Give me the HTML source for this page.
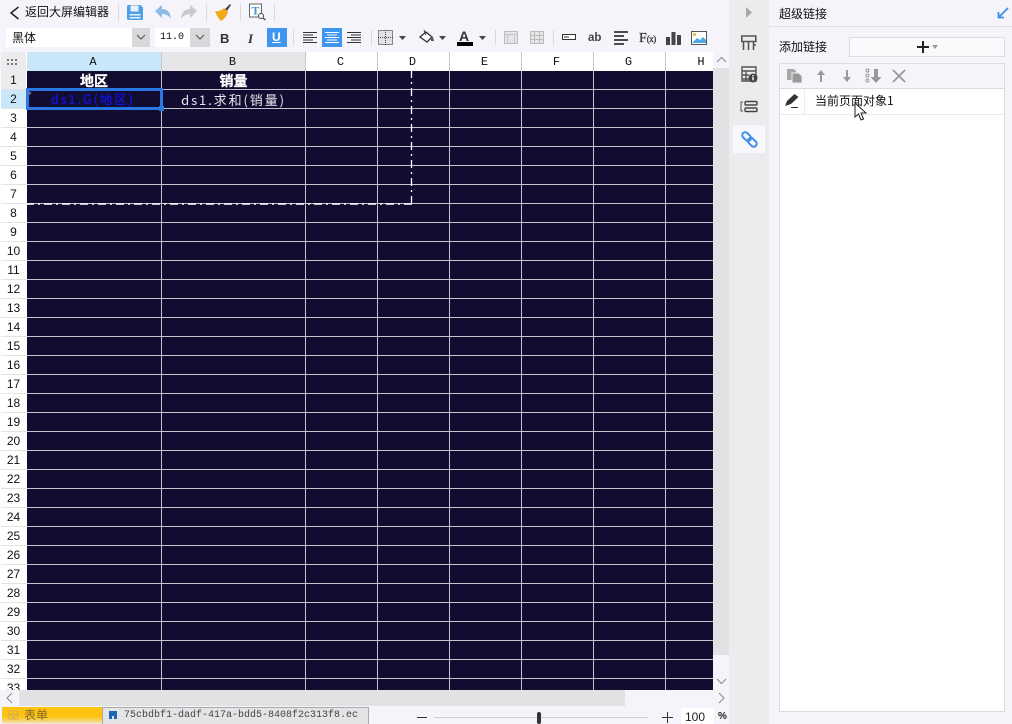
<!DOCTYPE html>
<html><head><meta charset="utf-8">
<style>
html,body{margin:0;padding:0;width:1012px;height:724px;overflow:hidden;background:#f4f4fa;font-family:"Liberation Sans","Noto Sans CJK SC",sans-serif;color:#111}
.a{position:absolute}
.t{position:absolute;white-space:nowrap;line-height:1}
.cjk{font-family:"WenQuanYi Zen Hei","Noto Sans CJK SC",sans-serif}
.mono{font-family:"Liberation Mono","WenQuanYi Zen Hei",monospace}
.sep{position:absolute;width:1px;background:#d8d8de}
.cl{position:absolute;top:52px;height:19px;text-align:center;font:12px/20px "Liberation Mono",monospace;color:#111;border-right:1px solid #c6c6cc;box-sizing:border-box;padding-right:2px}
.rl{position:absolute;left:1px;width:25px;height:19px;text-align:center;font:12px/19px "Liberation Sans",sans-serif;color:#111;background:#fff;box-sizing:border-box;border-bottom:1px solid #e2e2e6}
svg{position:absolute;overflow:visible}
</style></head>
<body>
<!-- top toolbar -->
<svg style="left:8px;top:6px" width="14" height="14"><path d="M10.500 1 3 7l7.500 6" fill="none" stroke="#222" stroke-width="1.500"/></svg>
<div class="t cjk" style="left:25px;top:6px;font-size:12px;color:#111">返回大屏编辑器</div>
<div class="sep" style="left:118px;top:4px;height:17px"></div>
<svg style="left:126px;top:4px" width="18" height="17"><path d="M1 2.500Q1 1 2.500 1h12L17 3.500V14.500Q17 16 15.500 16h-13Q1 16 1 14.500Z" fill="#4f9fe6"/><rect x="4.500" y="1.500" width="8" height="6" fill="#e8f1fa"/><rect x="3.500" y="10" width="11" height="1.500" fill="#e8f1fa"/><rect x="3.500" y="13" width="11" height="1.500" fill="#e8f1fa"/></svg>
<svg style="left:154px;top:4px" width="18" height="17"><path d="M1 7 8 1v4q8 0 9 10-3-5-9-5v4Z" fill="#8dbbe6"/></svg>
<svg style="left:180px;top:4px" width="18" height="17"><path d="M17 7 10 1v4Q2 5 1 15q3-5 9-5v4Z" fill="#c9c9cd"/></svg>
<div class="sep" style="left:206px;top:4px;height:17px"></div>
<svg style="left:214px;top:3px" width="18" height="18"><path d="M11 6 16 1l1 1-4 6Z" fill="#444"/><path d="M1 8q5 1 9-3l4 4q-2 6-7 9Q3 14 1 8Z" fill="#f3a916"/></svg>
<div class="sep" style="left:240px;top:4px;height:17px"></div>
<svg style="left:249px;top:3px" width="17" height="17"><rect x=".5" y="1" width="12" height="13" fill="#fff" stroke="#666"/><text x="2.500" y="11.500" font-family="Liberation Serif" font-weight="bold" font-size="12" fill="#4a90d0">T</text><circle cx="12" cy="13" r="2.500" fill="#fff" stroke="#444"/><path d="m14 15 2.500 2" stroke="#444" stroke-width="1.300"/></svg>
<div class="sep" style="left:274px;top:4px;height:17px"></div>

<!-- format toolbar -->
<div class="a" style="left:6px;top:28px;width:126px;height:19px;background:#fff"></div>
<div class="t cjk" style="left:12px;top:32px;font-size:12px">黑体</div>
<div class="a" style="left:132px;top:28px;width:18px;height:19px;background:#d9d9db"></div>
<svg style="left:136px;top:34px" width="10" height="7"><path d="m1 1 4 4 4-4" fill="none" stroke="#555" stroke-width="1.100"/></svg>
<div class="a" style="left:155px;top:28px;width:35px;height:19px;background:#fff"></div>
<div class="t mono" style="left:160px;top:33px;font-size:10px">11.0</div>
<div class="a" style="left:190px;top:28px;width:20px;height:19px;background:#d9d9db"></div>
<svg style="left:195px;top:34px" width="10" height="7"><path d="m1 1 4 4 4-4" fill="none" stroke="#555" stroke-width="1.100"/></svg>
<div class="t" style="left:220px;top:32px;font-size:13px;font-weight:bold;color:#333">B</div>
<div class="t" style="left:248px;top:31px;font:italic bold 13px 'Liberation Serif',serif;color:#333">I</div>
<div class="a" style="left:267px;top:28px;width:20px;height:19px;background:#3f96ef"></div>
<div class="t" style="left:272px;top:31px;font-size:12px;font-weight:bold;color:#fff;text-decoration:underline">U</div>
<div class="sep" style="left:293px;top:30px;height:15px"></div>
<svg style="left:303px;top:32px" width="15" height="13"><path d="M0 .5h14M0 3h10M0 5.500h14M0 8h10M0 10.500h14" stroke="#333" stroke-width="1"/></svg>
<div class="a" style="left:322px;top:28px;width:20px;height:19px;background:#3f96ef"></div>
<svg style="left:325px;top:32px" width="15" height="13"><path d="M0 .5h14M2 3h10M0 5.500h14M2 8h10M0 10.500h14" stroke="#fff" stroke-width="1"/></svg>
<svg style="left:347px;top:32px" width="15" height="13"><path d="M0 .5h14M4 3h10M0 5.500h14M4 8h10M0 10.500h14" stroke="#333" stroke-width="1"/></svg>
<div class="sep" style="left:371px;top:30px;height:15px"></div>
<svg style="left:378px;top:30px" width="15" height="15"><rect x=".5" y=".5" width="14" height="14" fill="#e2e2e6" stroke="#222" stroke-dasharray="1 1"/><path d="M7.500 0v15M0 7.500h15" stroke="#444" stroke-dasharray="1 1"/></svg>
<svg style="left:399px;top:36px" width="8" height="5"><path d="M0 0h7L3.500 4Z" fill="#444"/></svg>
<svg style="left:418px;top:29px" width="17" height="17"><path d="M2 8 8 3l6 5-5 5Z" fill="#fff" stroke="#333" stroke-width="1.300"/><path d="M6 1 8 6" stroke="#333"/><path d="M13 8h2l1 4h-3Z" fill="#555"/></svg>
<svg style="left:439px;top:36px" width="8" height="5"><path d="M0 0h7L3.500 4Z" fill="#444"/></svg>
<div class="t" style="left:459px;top:29px;font-size:14px;font-weight:bold;color:#333">A</div>
<div class="a" style="left:457px;top:42px;width:16px;height:4px;background:#000"></div>
<svg style="left:479px;top:36px" width="8" height="5"><path d="M0 0h7L3.500 4Z" fill="#444"/></svg>
<div class="sep" style="left:495px;top:30px;height:15px"></div>
<svg style="left:504px;top:31px" width="14" height="14"><rect x=".5" y=".5" width="13" height="12" fill="#e6e6e8" stroke="#bbb"/><path d="M0 3.500h14M3.500 3.500v9M10.500 3.500v9" stroke="#c4c4c8"/></svg>
<svg style="left:530px;top:31px" width="14" height="14"><rect x=".5" y=".5" width="13" height="12" fill="#e6e6e8" stroke="#bbb"/><path d="M0 4.500h14M0 8.500h14M4.500 0v13M9.500 0v13" stroke="#bbb"/></svg>
<div class="sep" style="left:553px;top:30px;height:15px"></div>
<svg style="left:562px;top:34px" width="14" height="7"><rect x=".5" y=".5" width="13" height="5" fill="#fff" stroke="#333"/><path d="M2 2.500h5v1H2Z" fill="#333"/></svg>
<div class="t" style="left:588px;top:33px;font-size:11.500px;font-weight:bold;color:#444">ab</div>
<svg style="left:614px;top:31px" width="15" height="14"><path d="M0 1h14M0 5h10M0 9h14M0 13h10" stroke="#333" stroke-width="1.800"/></svg>
<div class="t" style="left:639px;top:31px;font:14px 'Liberation Serif',serif;color:#333;-webkit-text-stroke:.3px #333">F<span style="font-size:9px;letter-spacing:-.5px">(x)</span></div>
<svg style="left:666px;top:32px" width="15" height="13"><path d="M0 5h4v8H0ZM5.500 0h4v13h-4ZM11 3h4v10h-4Z" fill="#444"/></svg>
<svg style="left:691px;top:31px" width="16" height="14"><rect x=".5" y=".5" width="15" height="13" fill="#fff" stroke="#555"/><path d="M1 12 6 7l3 2 3-3 3 3v3Z" fill="#4aa8e8"/><rect x="2" y="2" width="3" height="3" fill="#f3c04a"/></svg>

<!-- sheet -->
<div class="a" style="left:1px;top:52px;width:712px;height:19px;background:#fff"></div>
<div class="a" style="left:1px;top:52px;width:25px;height:19px;background:#ececee"></div>
<svg style="left:7px;top:58px" width="12" height="8"><path d="M0 1h2v2H0ZM4 1h2v2H4ZM8 1h2v2H8ZM0 5h2v2H0ZM4 5h2v2H4ZM8 5h2v2H8Z" fill="#777"/></svg>
<div class="cl" style="left:27px;width:135px;background:#c8e7f8">A</div>
<div class="cl" style="left:162px;width:144px;background:#e6e6e8">B</div>
<div class="cl" style="left:306px;width:72px">C</div>
<div class="cl" style="left:378px;width:72px">D</div>
<div class="cl" style="left:450px;width:72px">E</div>
<div class="cl" style="left:522px;width:72px">F</div>
<div class="cl" style="left:594px;width:72px">G</div>
<div class="cl" style="left:666px;width:47px;border-right:0;padding:0 0 0 23px">H</div>

<!-- grid -->
<div class="a" style="left:27px;top:71px;width:686px;height:619px;background-color:#110c30;background-image:repeating-linear-gradient(to bottom,transparent 0,transparent 18px,#c4c4cc 18px,#c4c4cc 19px),linear-gradient(to right,transparent 134px,#c4c4cc 134px,#c4c4cc 135px,transparent 135px,transparent 278px,#c4c4cc 278px,#c4c4cc 279px,transparent 279px,transparent 350px,#c4c4cc 350px,#c4c4cc 351px,transparent 351px,transparent 422px,#c4c4cc 422px,#c4c4cc 423px,transparent 423px,transparent 494px,#c4c4cc 494px,#c4c4cc 495px,transparent 495px,transparent 566px,#c4c4cc 566px,#c4c4cc 567px,transparent 567px,transparent 638px,#c4c4cc 638px,#c4c4cc 639px,transparent 639px)"></div>

<!-- row labels -->
<div class="a" style="left:0;top:71px;width:27px;height:619px;overflow:hidden;background:#fff">
<div class="rl" style="top:0;background:#ececee">1</div>
<div class="rl" style="top:19px;background:#c8e7f8">2</div>
<div class="rl" style="top:38px">3</div>
<div class="rl" style="top:57px">4</div>
<div class="rl" style="top:76px">5</div>
<div class="rl" style="top:95px">6</div>
<div class="rl" style="top:114px">7</div>
<div class="rl" style="top:133px">8</div>
<div class="rl" style="top:152px">9</div>
<div class="rl" style="top:171px">10</div>
<div class="rl" style="top:190px">11</div>
<div class="rl" style="top:209px">12</div>
<div class="rl" style="top:228px">13</div>
<div class="rl" style="top:247px">14</div>
<div class="rl" style="top:266px">15</div>
<div class="rl" style="top:285px">16</div>
<div class="rl" style="top:304px">17</div>
<div class="rl" style="top:323px">18</div>
<div class="rl" style="top:342px">19</div>
<div class="rl" style="top:361px">20</div>
<div class="rl" style="top:380px">21</div>
<div class="rl" style="top:399px">22</div>
<div class="rl" style="top:418px">23</div>
<div class="rl" style="top:437px">24</div>
<div class="rl" style="top:456px">25</div>
<div class="rl" style="top:475px">26</div>
<div class="rl" style="top:494px">27</div>
<div class="rl" style="top:513px">28</div>
<div class="rl" style="top:532px">29</div>
<div class="rl" style="top:551px">30</div>
<div class="rl" style="top:570px">31</div>
<div class="rl" style="top:589px">32</div>
<div class="rl" style="top:608px">33</div>
</div>

<!-- cell text -->
<div class="t cjk" style="left:27px;width:134px;top:74px;text-align:center;font-size:14px;font-weight:bold;color:#fff;-webkit-text-stroke:.3px #fff">地区</div>
<div class="t cjk" style="left:162px;width:143px;top:74px;text-align:center;font-size:14px;font-weight:bold;color:#fff;-webkit-text-stroke:.3px #fff">销量</div>
<div class="t cjk" style="left:26px;width:134px;top:93px;text-align:center;font-size:12.500px;color:#1212d4;letter-spacing:2px;-webkit-text-stroke:.4px #1212d4">ds1.G(地区)</div>
<div class="t cjk" style="left:162px;width:143px;top:93px;text-align:center;font-size:13px;color:#e8e8ee;letter-spacing:1.900px">ds1.求和(销量)</div>
<div class="a" style="left:26px;top:88px;width:137px;height:22px;border:3px solid #2a78e4;box-sizing:border-box"></div>
<div class="a" style="left:159px;top:106px;width:5px;height:5px;background:#2a78e4"></div>
<div class="t" style="left:28px;top:91px;font-size:9px;color:#aaa">*</div>

<!-- dashed page break -->
<svg style="left:0;top:0" width="1012" height="724"><path d="M411.500 71V204" stroke="#fff" stroke-width="1.300" stroke-dasharray="2 4 8 4" stroke-dashoffset="7" fill="none"/><path d="M27 204H412" stroke="#fff" stroke-width="1.500" stroke-dasharray="2 4 8 4" stroke-dashoffset="7" fill="none"/></svg>

<!-- scrollbars -->
<div class="a" style="left:713px;top:52px;width:16px;height:639px;background:#f4f4fa"></div>
<div class="a" style="left:713px;top:68px;width:16px;height:587px;background:#e2e2e4"></div>
<svg style="left:716px;top:56px" width="11" height="7"><path d="m1 6 4.500-4.500L10 6" fill="none" stroke="#888" stroke-width="1"/></svg>
<svg style="left:716px;top:678px" width="11" height="7"><path d="m1 1 4.500 4.500L10 1" fill="none" stroke="#888" stroke-width="1"/></svg>
<div class="a" style="left:0;top:690px;width:729px;height:16px;background:#f4f4fa"></div>
<div class="a" style="left:19px;top:690px;width:606px;height:16px;background:#e2e2e4"></div>
<svg style="left:6px;top:692px" width="8" height="12"><path d="M6 1 1 6l5 5" fill="none" stroke="#888"/></svg>
<svg style="left:717px;top:692px" width="8" height="12"><path d="m2 1 5 5-5 5" fill="none" stroke="#888"/></svg>

<!-- bottom tabs -->
<div class="a" style="left:0;top:706px;width:729px;height:18px;background:#f4f4fa"></div>
<div class="a" style="left:2px;top:707px;width:101px;height:17px;background:linear-gradient(#ffc20e 0,#ffc20e 55%,#f5d98a 88%,#eee 100%)"></div>
<div class="t cjk" style="left:24px;top:709px;font-size:12px;color:#806a30">表单</div>
<svg style="left:8px;top:710px" width="11" height="10"><path d="M1 1h9v3H1ZM1 5h4v4H1ZM6 5h4v4H6Z" fill="none" stroke="#d8b050"/></svg>
<div class="a" style="left:102px;top:707px;width:267px;height:17px;background:#e4e4e6;border:1px solid #aaa;border-bottom:0;box-sizing:border-box"></div>
<svg style="left:109px;top:711px" width="9" height="9"><path d="M0 0h8v8H5V5H3v3H0Z" fill="#1e66b8"/></svg>
<div class="t mono" style="left:124px;top:711px;font-size:10px;color:#444">75cbdbf1-dadf-417a-bdd5-8408f2c313f8.ec</div>

<!-- zoom -->
<div class="a" style="left:417px;top:717px;width:10px;height:1px;background:#333"></div>
<div class="a" style="left:434px;top:717px;width:214px;height:1px;background:#d0d0d4"></div>
<div class="a" style="left:537px;top:712px;width:4px;height:12px;background:#333;border-radius:2px"></div>
<svg style="left:662px;top:712px" width="11" height="11"><path d="M5.500 0v11M0 5.500h11" stroke="#333"/></svg>
<div class="a" style="left:681px;top:708px;width:33px;height:16px;background:#fff"></div>
<div class="t" style="left:685px;top:711px;font-size:12px;color:#222">100</div>
<div class="t" style="left:718px;top:712px;font-size:10px;font-weight:bold;color:#222">%</div>

<!-- sidebar -->
<div class="a" style="left:729px;top:0;width:40px;height:724px;background:#ececee"></div>
<svg style="left:746px;top:7px" width="7" height="11"><path d="M0 0 6 5.500 0 11Z" fill="#aaa"/></svg>
<svg style="left:741px;top:35px" width="16" height="16"><path d="M.800 1h14v5.500H.800ZM2.500 6.500V15M7.500 6.500V15M12.500 6.500V15M12.500 10h2.500" fill="none" stroke="#555" stroke-width="1.600"/></svg>
<svg style="left:741px;top:66px" width="17" height="17"><path d="M1 1h14v14H1ZM1 5h14M1 9h7M1 13h7M5 5v10" fill="none" stroke="#555" stroke-width="1.400"/><circle cx="12" cy="12" r="4.500" fill="#444"/><rect x="11.300" y="10.800" width="1.400" height="3.500" fill="#fff"/><rect x="11.300" y="9" width="1.400" height="1.200" fill="#fff"/></svg>
<svg style="left:740px;top:100px" width="19" height="14"><path d="M3 2H1v9h2" fill="none" stroke="#555"/><rect x="5" y="1.500" width="12" height="3.500" rx="1" fill="none" stroke="#444" stroke-width="1.400"/><rect x="5" y="8" width="12" height="3.500" rx="1" fill="none" stroke="#444" stroke-width="1.400"/></svg>
<div class="a" style="left:733px;top:125px;width:32px;height:28px;background:#f8f8fc"></div>
<svg style="left:741px;top:131px" width="17" height="17"><g transform="rotate(45 8.500 8.500)" fill="none" stroke="#3f8fe8" stroke-width="2"><rect x="-.5" y="5.500" width="10" height="6" rx="3"/><rect x="7.500" y="5.500" width="10" height="6" rx="3"/></g></svg>

<!-- panel -->
<div class="a" style="left:769px;top:0;width:243px;height:724px;background:#f4f4fa"></div>
<div class="a" style="left:769px;top:26px;width:243px;height:1px;background:#e2e2e6"></div>
<div class="t cjk" style="left:779px;top:8px;font-size:12px;color:#111">超级链接</div>
<svg style="left:997px;top:7px" width="12" height="12"><path d="M11 1 2 10M1.500 5v5.500H7" fill="none" stroke="#3f8fe8" stroke-width="1.800"/></svg>
<div class="t cjk" style="left:779px;top:41px;font-size:12px;color:#111">添加链接</div>
<div class="a" style="left:849px;top:37px;width:156px;height:20px;background:#fafafd;border:1px solid #dcdce2;box-sizing:border-box"></div>
<svg style="left:916px;top:40px" width="14" height="14"><path d="M7 1v12M1 7h12" stroke="#222" stroke-width="2"/></svg>
<svg style="left:932px;top:45px" width="6" height="4"><path d="M0 0h6L3 4Z" fill="#999"/></svg>
<div class="a" style="left:779px;top:63px;width:226px;height:649px;background:#fff;border:1px solid #dcdce2;box-sizing:border-box"></div>
<div class="a" style="left:780px;top:64px;width:224px;height:24px;background:#f4f4fa;border-bottom:1px solid #dcdce2"></div>
<svg style="left:786px;top:68px" width="18" height="16"><path d="M1 1h7l2 2v9H1Z" fill="#a8a8a8"/><path d="M6 5h7l3 3v7H6Z" fill="#999" stroke="#eee"/></svg>
<svg style="left:815px;top:69px" width="12" height="14"><path d="M6 1 2 6h3v7h2V6h3Z" fill="#999"/></svg>
<svg style="left:841px;top:69px" width="12" height="14"><path d="M6 13 2 8h3V1h2v7h3Z" fill="#999"/></svg>
<svg style="left:865px;top:68px" width="17" height="16"><circle cx="2.500" cy="2.500" r="1.500" fill="none" stroke="#999"/><circle cx="2.500" cy="7.500" r="1.500" fill="none" stroke="#999"/><circle cx="2.500" cy="12.500" r="1.500" fill="none" stroke="#999"/><path d="M11 15 5.500 9H9V1h4v8h3.500Z" fill="#999"/></svg>
<svg style="left:892px;top:69px" width="14" height="14"><path d="m1 1 12 12M13 1 1 13" stroke="#999" stroke-width="1.800"/></svg>
<div class="a" style="left:780px;top:114px;width:224px;height:1px;background:#ececf0"></div>
<div class="a" style="left:804px;top:89px;width:1px;height:25px;background:#ececf0"></div>
<svg style="left:785px;top:93px" width="15" height="16"><path d="M0 13 2 8 9.500 1l4 3L6 11Z" fill="#333"/><path d="M6 14.500h7" stroke="#333"/></svg>
<div class="t cjk" style="left:815px;top:95px;font-size:12px;color:#111">当前页面对象1</div>
<svg style="left:854px;top:102px" width="13" height="20"><path d="M1 1v14l3.500-3 2.500 6 2.500-1-2.500-6H12Z" fill="#fff" stroke="#222"/></svg>
</body></html>
